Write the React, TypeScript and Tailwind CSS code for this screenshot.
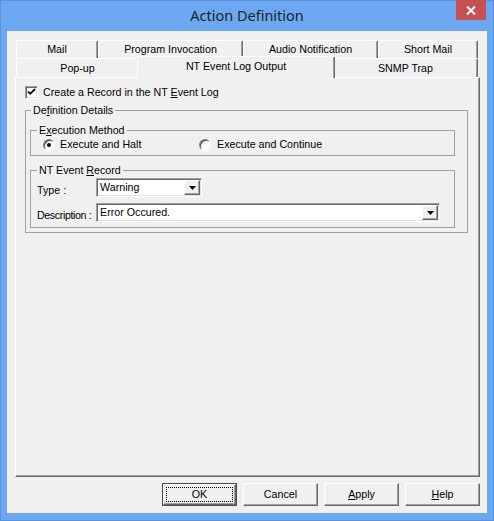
import type { ReactNode } from 'react'

// Classic Win32 property sheet: "Action Definition" dialog

const raised =
    'border border-t-white border-l-white border-r-[#696969] border-b-[#696969] shadow-[inset_-1px_-1px_0_#a0a0a0]'
const sunken =
    'border border-t-[#a0a0a0] border-l-[#a0a0a0] border-r-white border-b-white shadow-[inset_1px_1px_0_#696969,inset_-1px_-1px_0_#e3e3e3]'

interface TabDef {
    label: string
    width: string
    selected?: boolean
}

const backRow: TabDef[] = [
    { label: 'Mail', width: 'w-[82px]' },
    { label: 'Program Invocation', width: 'w-[145px]' },
    { label: 'Audio Notification', width: 'w-[135px]' },
    { label: 'Short Mail', width: 'w-[100px]' },
]

const frontRow: TabDef[] = [
    { label: 'Pop-up', width: 'w-[123px]' },
    { label: 'NT Event Log Output', width: 'w-[198px]', selected: true },
    { label: 'SNMP Trap', width: 'w-[145px]' },
]

function Tab({ label, width, selected }: TabDef) {
    if (selected) {
        return (
            <div
                className={`${width} relative z-10 -mx-[2px] -mb-[1px] h-[22px] pb-[3px] flex items-center justify-center bg-[#f0f0f0] border-t border-l border-white border-r border-r-[#696969] rounded-t-[2px] shadow-[inset_-1px_0_0_#a0a0a0]`}
            >
                {label}
            </div>
        )
    }
    return (
        <div
            className={`${width} h-full flex items-center justify-center border-t border-l border-white border-r border-r-[#696969] rounded-t-[2px] shadow-[inset_-1px_0_0_#a0a0a0]`}
        >
            {label}
        </div>
    )
}

function U({ children }: { children: ReactNode }) {
    return <span className="underline underline-offset-[1px]">{children}</span>
}

function Checkbox() {
    return (
        <div className={`w-[13px] h-[13px] bg-white ${sunken} flex items-center justify-center`}>
            <svg width="9" height="9" viewBox="0 0 9 9">
                <path d="M1 3.5 L3.2 5.8 L8 1" fill="none" stroke="#000" strokeWidth="1.8" />
            </svg>
        </div>
    )
}

function Radio({ checked }: { checked?: boolean }) {
    return (
        <div className="w-[12px] h-[12px] rounded-full bg-white border border-t-[#808080] border-l-[#808080] border-r-white border-b-white shadow-[inset_1px_1px_0_#404040] flex items-center justify-center">
            {checked && <div className="w-[4px] h-[4px] rounded-full bg-black" />}
        </div>
    )
}

function Combo({ value, width }: { value: string; width: string }) {
    return (
        <div className={`${width} h-[19px] bg-white ${sunken} flex items-center pl-[3px] pr-[1px]`}>
            <span className="flex-1 leading-[13px]">{value}</span>
            <div className={`w-[16px] h-[15px] bg-[#f0f0f0] ${raised} flex items-center justify-center`}>
                <svg width="7" height="4" viewBox="0 0 7 4">
                    <path d="M0 0 H7 L3.5 4 Z" fill="#000" />
                </svg>
            </div>
        </div>
    )
}

function Button({ children, isDefault }: { children: ReactNode; isDefault?: boolean }) {
    if (isDefault) {
        return (
            <div className="w-[75px] h-[23px] border border-[#4a4a4a]">
                <div className={`w-full h-full ${raised} p-[2px]`}>
                    <div className="w-full h-full border border-dotted border-black flex items-center justify-center">
                        {children}
                    </div>
                </div>
            </div>
        )
    }
    return (
        <div className={`w-[75px] h-[23px] ${raised} flex items-center justify-center`}>{children}</div>
    )
}

export default function App() {
    return (
        <div className="w-[494px] h-[521px] bg-[#6ba8f1] shadow-[inset_0_0_0_1px_#5a91d8] flex flex-col font-['Liberation_Sans',Arial,sans-serif] text-[10.7px] text-black">
            {/* title bar */}
            <div className="relative h-[31px] shrink-0 flex items-center justify-center">
                <span className="font-['Noto_Sans',sans-serif] text-[14.5px] text-[#1f1f1f] leading-none pb-[1px]">
                    Action Definition
                </span>
                <div className="absolute top-0 right-[8px] w-[30px] h-[20px] bg-[#c75050] flex items-center justify-center">
                    <svg width="10" height="9" viewBox="0 0 10 9">
                        <path d="M1 0.5 L9 8.5 M9 0.5 L1 8.5" stroke="#fff" strokeWidth="2" />
                    </svg>
                </div>
            </div>

            {/* client area */}
            <div className="flex-1 mx-[7px] mb-[8px] bg-[#f0f0f0] pt-[9px] pl-[8px] pr-[7px] flex flex-col">
                <div className="w-[465px]">
                    <div className="flex h-[18px] pl-[1px]">
                        {backRow.map(t => (
                            <Tab key={t.label} {...t} />
                        ))}
                    </div>
                    <div className="flex h-[19px] pl-[1px] items-end">
                        {frontRow.map(t =>
                            t.selected ? (
                                <Tab key={t.label} {...t} />
                            ) : (
                                <div key={t.label} className="h-full flex">
                                    <Tab {...t} />
                                </div>
                            )
                        )}
                    </div>
                </div>

                {/* tab page */}
                <div className={`w-[465px] h-[400px] ${raised} pt-[8px] pl-[9px] whitespace-nowrap`}>
                    <div className="flex items-center h-[13px] gap-[5px]">
                        <Checkbox />
                        <span className="leading-[13px]">
                            Create a Record in the NT <U>E</U>vent Log
                        </span>
                    </div>

                    <fieldset className="mt-[5px] w-[443px] border border-[#a0a0a0] pl-[4px] pr-[12px] pt-[7px] pb-[4px]">
                        <legend className="ml-[1px] px-[2px] leading-[13px]">
                            De<U>f</U>inition Details
                        </legend>

                        <fieldset className="border border-[#a0a0a0] pl-[6px] pt-[1px] pb-[4px]">
                            <legend className="px-[2px] leading-[13px]">
                                E<U>x</U>ecution Method
                            </legend>
                            <div className="flex items-center h-[13px] ml-[6px]">
                                <div className="w-[156px] flex items-center gap-[5px]">
                                    <Radio checked />
                                    <span className="leading-[13px]">Execute and Halt</span>
                                </div>
                                <div className="flex items-center gap-[6px]">
                                    <Radio />
                                    <span className="leading-[13px]">Execute and Continue</span>
                                </div>
                            </div>
                        </fieldset>

                        <fieldset className="mt-[8px] border border-[#a0a0a0] pl-[6px] pt-[1px] pb-[5px]">
                            <legend className="px-[2px] leading-[13px]">
                                NT Event <U>R</U>ecord
                            </legend>
                            <div className="flex items-start">
                                <span className="w-[59px] pt-[6px] leading-[13px]">Type :</span>
                                <Combo value="Warning" width="w-[106px]" />
                            </div>
                            <div className="flex items-start mt-[6px]">
                                <span className="w-[59px] pt-[6px] leading-[13px] tracking-[-0.4px]">
                                    Description :
                                </span>
                                <Combo value="Error Occured." width="w-[344px]" />
                            </div>
                        </fieldset>
                    </fieldset>
                </div>

                {/* buttons */}
                <div className="w-[465px] mt-[6px] flex justify-end gap-[6px]">
                    <Button isDefault>OK</Button>
                    <Button>Cancel</Button>
                    <Button>
                        <U>A</U>pply
                    </Button>
                    <Button>
                        <U>H</U>elp
                    </Button>
                </div>
            </div>
        </div>
    )
}
